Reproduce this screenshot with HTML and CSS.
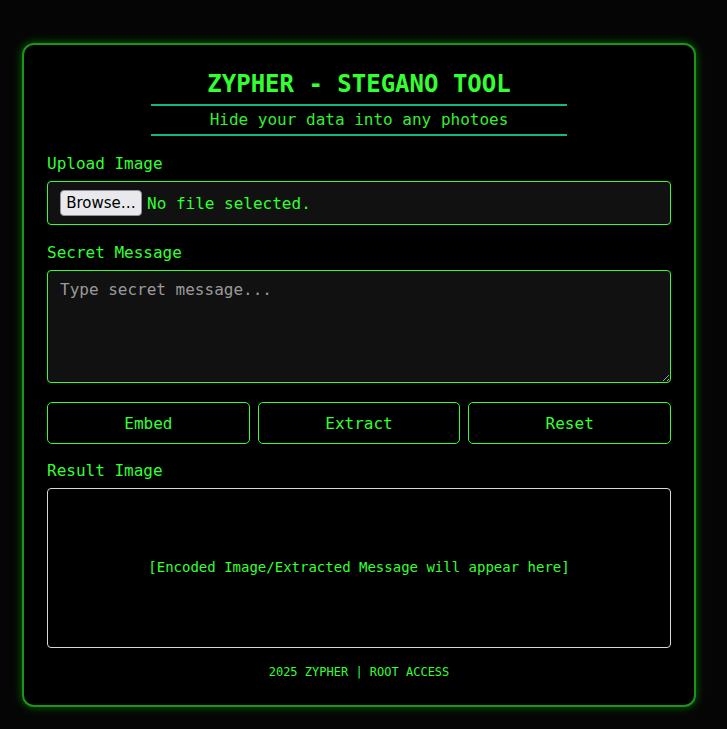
FILE: index.html
```html
<!DOCTYPE html>
<html lang="en">
<head>
<meta charset="utf-8">
<title>ZYPHER - Stegano Tool</title>
<link rel="stylesheet" href="styles.css">
</head>
<body>
<main class="card">
  <h1 class="title">ZYPHER - STEGANO TOOL</h1>
  <p class="subtitle">Hide your data into any photoes</p>

  <section class="field">
    <label class="label">Upload Image</label>
    <div class="file-box">
      <span class="browse">Browse…</span>
      <span class="file-name">No file selected.</span>
    </div>
  </section>

  <section class="field message-field">
    <label class="label" for="msg">Secret Message</label>
    <textarea id="msg" class="message" placeholder="Type secret message..."></textarea>
  </section>

  <div class="actions">
    <button class="btn">Embed</button>
    <button class="btn">Extract</button>
    <button class="btn">Reset</button>
  </div>

  <section class="field result-field">
    <label class="label">Result Image</label>
    <div class="result">[Encoded Image/Extracted Message will appear here]</div>
  </section>

  <footer class="footer">2025 ZYPHER | ROOT ACCESS</footer>
</main>
</body>
</html>
```

FILE: styles.css
```css
* { box-sizing: border-box; }

html, body {
  margin: 0;
  padding: 0;
  background: #050505;
}

body {
  font-family: "DejaVu Sans Mono", "Liberation Mono", monospace;
  color: #33ff33;
  padding: 43px 31px 22px 22px;
}

.card {
  width: 674px;
  background: #000;
  border: 2px solid #1c941c;
  border-radius: 12px;
  box-shadow: 0 0 10px rgba(0, 255, 0, 0.4);
  padding: 26px 23px 26px;
}

.title {
  margin: 0 0 6px;
  font-size: 24px;
  font-weight: bold;
  text-align: center;
  color: #33ff33;
  line-height: 27px;
}

.subtitle {
  width: 66.6667%;
  margin: 0 auto 20px;
  padding: 5px 0;
  border-top: 2px solid #14b77f;
  border-bottom: 2px solid #14b77f;
  text-align: center;
  font-size: 16px;
  line-height: 18px;
  color: #33ee33;
}

.field {
  display: flex;
  flex-direction: column;
  margin-bottom: 20px;
}

.label {
  display: block;
  font-size: 16px;
  line-height: 16px;
  margin-bottom: 9px;
  color: #33ff33;
}

.file-box {
  display: flex;
  align-items: center;
  gap: 5px;
  height: 44px;
  padding: 0 12px;
  background: #111;
  border: 1px solid #33ff33;
  border-radius: 4px;
}

.browse {
  display: inline-flex;
  align-items: center;
  justify-content: center;
  width: 82px;
  height: 26px;
  background: #e9e9ed;
  border: 1px solid #8f8f9d;
  border-radius: 4px;
  color: #000;
  font-family: "DejaVu Sans", "Noto Sans", sans-serif;
  font-size: 15px;
}

.file-name {
  font-size: 16px;
  line-height: 18px;
  padding-top: 2px;
  color: #33ff33;
}

.message-field {
  margin-bottom: 19px;
}

.message {
  display: block;
  width: 100%;
  height: 113px;
  padding: 9px 12px 12px;
  background: #111;
  border: 1px solid #33ff33;
  border-radius: 4px;
  color: #33ff33;
  font-family: "DejaVu Sans Mono", "Liberation Mono", monospace;
  font-size: 16px;
  resize: vertical;
  outline: none;
}

.message::placeholder {
  color: #9a9a9a;
  opacity: 1;
}

.actions {
  display: flex;
  gap: 8px;
  margin-bottom: 19px;
}

.btn {
  flex: 1;
  height: 42px;
  padding: 0;
  background: #000;
  border: 1px solid #33ff33;
  border-radius: 5px;
  color: #33ff33;
  font-family: "DejaVu Sans Mono", "Liberation Mono", monospace;
  font-size: 16px;
  cursor: pointer;
}

.result-field {
  margin-bottom: 17px;
}

.result {
  display: flex;
  align-items: center;
  justify-content: center;
  height: 160px;
  padding-bottom: 2px;
  border: 1px solid #d8d8d8;
  border-radius: 4px;
  background: #000;
  font-size: 14px;
  color: #33ff33;
}

.footer {
  text-align: center;
  font-size: 12px;
  line-height: 14px;
  color: #33ff33;
}
```
